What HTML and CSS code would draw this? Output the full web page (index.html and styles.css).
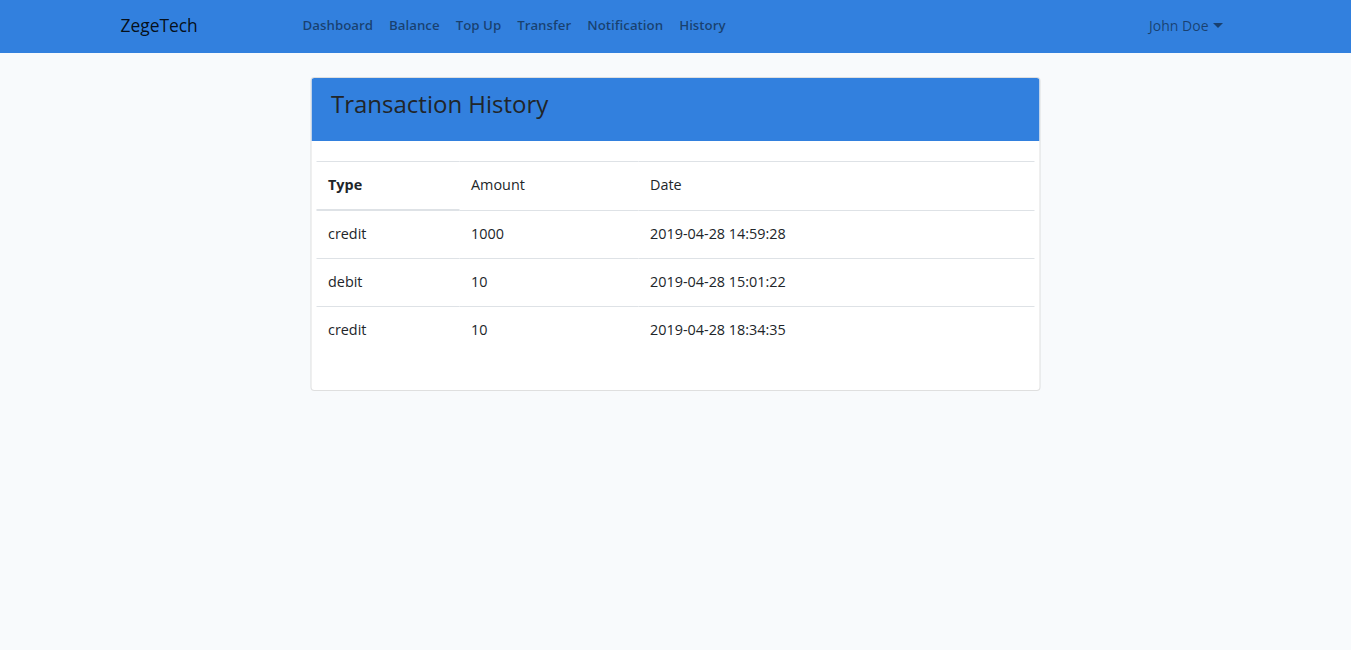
FILE: index.html
```html
<!DOCTYPE html>
<html lang="en">
<head>
<meta charset="utf-8">
<title>ZegeTech - Transaction History</title>
<link rel="stylesheet" href="styles.css">
</head>
<body>
<nav class="navbar">
  <div class="container nav-inner">
    <a class="brand" href="#">ZegeTech</a>
    <ul class="nav-links">
      <li><a href="#">Dashboard</a></li>
      <li><a href="#">Balance</a></li>
      <li><a href="#">Top Up</a></li>
      <li><a href="#">Transfer</a></li>
      <li><a href="#">Notification</a></li>
      <li><a href="#">History</a></li>
    </ul>
    <a class="user" href="#">John Doe<span class="caret"></span></a>
  </div>
</nav>
<main class="main">
  <div class="card">
    <div class="card-header"><h2>Transaction History</h2></div>
    <div class="card-body">
      <table class="table">
        <thead>
          <tr><th class="c1">Type</th><td class="c2">Amount</td><td class="c3">Date</td></tr>
        </thead>
        <tbody>
          <tr><td>credit</td><td>1000</td><td>2019-04-28 14:59:28</td></tr>
          <tr><td>debit</td><td>10</td><td>2019-04-28 15:01:22</td></tr>
          <tr><td>credit</td><td>10</td><td>2019-04-28 18:34:35</td></tr>
        </tbody>
      </table>
    </div>
  </div>
</main>
</body>
</html>
```
FILE: styles.css
```css
* { box-sizing: border-box; }
html, body { margin: 0; padding: 0; }
body {
  font-family: "Open Sans", "Lato", sans-serif;
  font-size: 14.4px;
  line-height: 1.6;
  color: #212529;
  background: #f8fafc;
  min-height: 650px;
}
a { text-decoration: none; }
.container {
  max-width: 1140px;
  margin: 0 auto;
  padding: 0 15px;
}
.navbar {
  background: #3280de;
  height: 53px;
}
.nav-inner {
  display: flex;
  align-items: center;
  height: 53px;
  padding-bottom: 1px;
}
.brand {
  font-size: 17.4px;
  color: rgba(0,0,0,.9);
  width: 174px;
}
.nav-links {
  display: flex;
  list-style: none;
  margin: 0;
  padding: 0;
  flex: 1;
}
.nav-links a, .user {
  display: block;
  padding: 8px;
  color: rgba(0,0,0,.5);
}
.nav-links a {
  font-weight: 600;
  font-size: 13.3px;
}
.user { display: flex; align-items: center; font-size: 14px; }
.caret {
  display: inline-block;
  margin-left: 4px;
  border-top: 5px solid rgba(0,0,0,.5);
  border-left: 5px solid transparent;
  border-right: 5px solid transparent;
}
.main {
  max-width: 730px;
  margin: 24px auto 0;
  transform: translateX(-0.5px);
}
.card {
  background: #fff;
  border: 1px solid rgba(0,0,0,.125);
  border-radius: 4px;
  overflow: hidden;
}
.card-header {
  background: #3280de;
  height: 63px;
  padding: 0 20px 10px;
  display: flex;
  align-items: center;
}
.card-header h2 {
  margin: 0;
  font-weight: 400;
  font-size: 24px;
  line-height: 1.2;
  color: #212529;
}
.card-body {
  padding: 20px 5px;
}
.table {
  width: 100%;
  border-collapse: collapse;
  margin-bottom: 16px;
}
.table th, .table td {
  text-align: left;
  padding: 11px 12px 13px;
  border-top: 1px solid #dee2e6;
  vertical-align: top;
  line-height: 23px;
}
.table th { font-weight: 700; border-bottom: 2px solid #dee2e6; }
.c1 { width: 143px; }
.c2 { width: 179px; }
```
